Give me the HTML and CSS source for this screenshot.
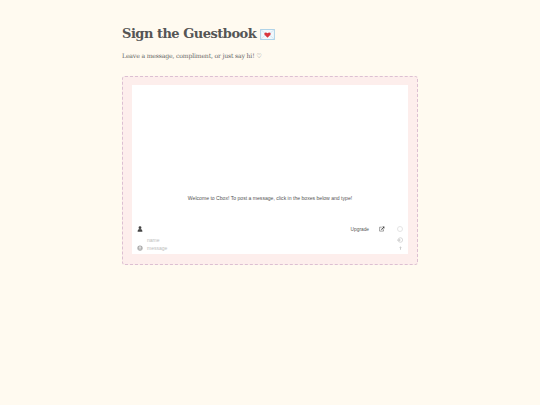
FILE: index.html
```html
<!DOCTYPE html>
<html lang="en">
<head>
<meta charset="utf-8">
<title>Sign the Guestbook</title>
<link rel="stylesheet" href="styles.css">
</head>
<body>
<main class="page">
  <h1 class="title">Sign the Guestbook
    <svg class="envelope" viewBox="0 0 16 12" aria-hidden="true">
      <rect x="0.5" y="0.5" width="15" height="11" fill="#f2f8fc" stroke="#a9cfe6"/>
      <path d="M1 1l7 6 7-6M1 11l5-5M15 11l-5-5" fill="none" stroke="#c5dcec" stroke-width=".7"/>
      <path d="M8 9.500 4.800 6.200C3.600 4.800 5.800 2.600 8 4.600c2.200-2 4.400.2 3.200 1.600z" fill="#d9363e"/>
    </svg>
  </h1>
  <p class="lead">Leave a message, compliment, or just say hi! ♡</p>
  <section class="frame">
    <div class="chat">
      <div class="messages">
        <p class="welcome">Welcome to Cbox! To post a message, click in the boxes below and type!</p>
      </div>
      <div class="toolbar">
        <svg class="user" viewBox="0 0 8 8" aria-hidden="true"><circle cx="4" cy="2.200" r="1.900"/><path d="M.8 7.600C.8 5 2 4 4 4s3.200 1 3.200 3.600z"/></svg>
        <span class="upgrade">Upgrade</span>
        <svg class="external" viewBox="0 0 10 10" aria-hidden="true"><path d="M7.500 5.500v3h-6.500v-6.500h3.500" fill="none" stroke="#555" stroke-width=".9"/><path d="M5.500 1h3.500v3.500l-1.200-1.200-3.300 3.300-1-1 3.300-3.300z" fill="#444"/></svg>
        <span class="ring"></span>
      </div>
      <div class="field">
        <span class="slot"></span>
        <span class="hint">name</span>
        <svg class="login" viewBox="0 0 8 8" aria-hidden="true"><circle cx="4.500" cy="4" r="3" fill="none" stroke="#ccc"/><path d="M0 3.500h3v-1.500l2 2-2 2v-1.500h-3z" fill="#ccc"/></svg>
      </div>
      <div class="field field-last">
        <svg class="smile" viewBox="0 0 8 8" aria-hidden="true"><circle cx="4" cy="4" r="3.500" fill="#a5a5a5"/><circle cx="4" cy="3.300" r="1.700" fill="#ddd"/><path d="M1.800 5.500h4.400" stroke="#ddd"/></svg>
        <span class="hint">message</span>
        <svg class="arrow" viewBox="0 0 6 8" aria-hidden="true"><path d="M3 .5 5.500 4h-1.500v3.500h-2v-3.500h-1.500z" fill="#ccc"/></svg>
      </div>
    </div>
  </section>
</main>
</body>
</html>
```

FILE: styles.css
```css
* { box-sizing: border-box; }
html, body { margin: 0; height: 100%; }
body { background: #fffaf0; color: #4a4a4a; font-family: "DejaVu Serif", Georgia, serif; }
.page { width: 296px; margin-left: 122px; padding-top: 24px; }
.title {
  display: flex;
  align-items: center;
  gap: 4px;
  margin: 0;
  height: 20px;
  font-family: "DejaVu Serif", Georgia, serif;
  font-size: 13px;
  letter-spacing: -0.5px;
  line-height: 20px;
  font-weight: 700;
  color: #555;
}
.envelope { width: 15px; height: 11px; }
.lead {
  margin: 6px 0 0;
  height: 11px;
  font-family: "DejaVu Serif", Georgia, serif;
  font-size: 6.200px;
  letter-spacing: -0.2px;
  line-height: 11px;
  color: #666;
}
.frame {
  margin-top: 15px;
  height: 189px;
  padding: 8px 9px 10px;
  background: #fdeeec;
  border: 1px dashed #dcbfd2;
  border-radius: 3px;
}
.chat {
  display: flex;
  flex-direction: column;
  height: 100%;
  background: #fff;
  padding: 0 3px 2px 5px;
  font-family: "Liberation Sans", Arial, sans-serif;
}
.messages {
  flex: 1;
  display: flex;
  align-items: flex-end;
  justify-content: center;
  padding-bottom: 21px;
  padding-right: 2px;
}
.welcome { margin: 0; font-size: 5.100px; line-height: 8px; color: #555; }
.toolbar { display: flex; align-items: center; height: 12px; }
.user { width: 6px; height: 6px; fill: #444; }
.upgrade { margin-left: auto; font-size: 4.800px; color: #555; }
.external { width: 6px; height: 6px; margin-left: 10px; }
.ring { width: 6px; height: 6px; margin: 0 2px 0 12px; border: 1px solid #e4e4e4; border-radius: 50%; }
.field { display: flex; align-items: center; height: 9px; }
.field-last { height: 8px; }
.slot { width: 6px; }
.smile { width: 6px; height: 6px; }
.hint { margin-left: 4px; font-size: 5px; color: #bdbdbd; }
.login { width: 6px; height: 6px; margin-left: auto; margin-right: 2px; }
.arrow { width: 3px; height: 4px; margin-left: auto; margin-right: 3px; }
```
